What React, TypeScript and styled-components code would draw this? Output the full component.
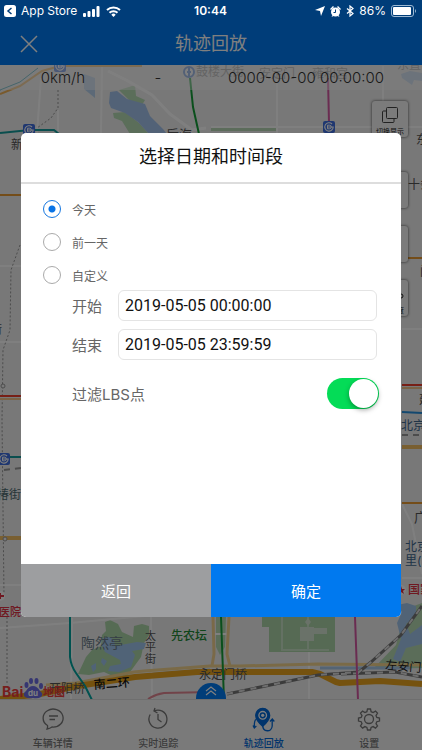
import React, { useState } from "react";
import styled, { createGlobalStyle } from "styled-components";

const sans = `"Inter", "Noto Sans CJK SC", sans-serif`;

const GlobalStyle = createGlobalStyle`
  * { box-sizing: border-box; }
  body { margin: 0; font-family: ${sans}; }
  button, input { font-family: inherit; }
`;

const Screen = styled.div`
  position: relative;
  display: flex;
  flex-direction: column;
  min-height: 100vh;
  overflow: hidden;
  background: #f4f4f4;
`;

const StatusBar = styled.div`
  position: relative;
  z-index: 3;
  display: grid;
  grid-template-columns: 1fr auto 1fr;
  align-items: center;
  height: 22px;
  padding: 0 5px 0 4px;
  background: #003d79;
  color: #fff;
  font-size: 12px;
  line-height: 20px;
`;

const StatusGroup = styled.div<{ $end?: boolean }>`
  display: flex;
  align-items: center;
  justify-content: ${(p) => (p.$end ? "flex-end" : "flex-start")};
  gap: ${(p) => (p.$end ? 5 : 6)}px;
`;

const BackLink = styled.a`
  display: flex;
  align-items: center;
  gap: 5px;
  color: inherit;
  text-decoration: none;
`;

const Clock = styled.time`
  font-weight: 600;
`;

const Header = styled.header`
  display: grid;
  grid-template-columns: 44px 1fr 44px;
  align-items: center;
  height: 43px;
  padding: 0 7px;
  background: #007af2;
  color: #fff;
`;

const PlainButton = styled.button`
  display: flex;
  align-items: center;
  justify-content: center;
  padding: 0;
  border: 0;
  background: none;
  color: inherit;
`;

const HeaderTitle = styled.h1`
  margin: 0;
  font-size: 18px;
  line-height: 24px;
  font-weight: 400;
  text-align: center;
`;

const MapArea = styled.main`
  position: relative;
  flex: 1;
  min-height: 634px;
`;

const MapCanvas = styled.svg`
  position: absolute;
  inset: 0;
  width: 100%;
  height: 100%;
`;

const InfoStrip = styled.div`
  position: relative;
  display: grid;
  grid-template-columns: 126px 64px 1fr;
  height: 25px;
  align-items: center;
  text-align: center;
  background: rgba(255, 255, 255, 0.45);
  color: #333;
  font-size: 15px;
  font-weight: 300;
`;

const MapTools = styled.div`
  position: absolute;
  top: 36px;
  right: 14px;
  display: flex;
  flex-direction: column;
  gap: 18px;
`;

const MapTool = styled.button<{ $spaced?: boolean }>`
  display: flex;
  flex-direction: column;
  align-items: center;
  justify-content: space-between;
  width: 36px;
  height: 36px;
  padding: 6px 0 0;
  margin-bottom: ${(p) => (p.$spaced ? 17 : 0)}px;
  border: 0;
  border-radius: 3px;
  background: #f6f6f6;
  box-shadow: 0 0 3px rgba(0, 0, 0, 0.7);
  color: #222;
  font-size: 7px;
  line-height: 11px;
  white-space: nowrap;
`;

const ExpandButton = styled.button`
  position: absolute;
  left: 50%;
  bottom: 0;
  display: flex;
  align-items: center;
  justify-content: center;
  width: 30px;
  height: 16px;
  margin-left: -15px;
  padding: 0;
  border: 0;
  border-radius: 16px 16px 0 0;
  background: #007af2;
  color: #fff;
`;

const TabBar = styled.nav`
  display: grid;
  grid-template-columns: repeat(4, 1fr);
  height: 51px;
  border-top: 1px solid #ddd;
  background: #f4f4f4;
`;

const Tab = styled.a<{ $active?: boolean }>`
  display: flex;
  flex-direction: column;
  align-items: center;
  justify-content: flex-end;
  gap: 6px;
  color: ${(p) => (p.$active ? "#0068d8" : "#777")};
  font-size: 10px;
  line-height: 14px;
  font-weight: 500;
  text-decoration: none;
`;

const Backdrop = styled.div`
  position: absolute;
  inset: 0;
  z-index: 2;
  display: flex;
  align-items: center;
  padding: 0 21px;
  background: rgba(0, 0, 0, 0.5);
`;

const Dialog = styled.form`
  flex: 1;
  overflow: hidden;
  border-radius: 5px;
  background: #fff;
`;

const DialogTitle = styled.h2`
  margin: 0;
  padding: 12px 0 13px;
  border-bottom: 2px solid #ddd;
  color: #111;
  font-size: 18px;
  line-height: 24px;
  font-weight: 400;
  text-align: center;
`;

const DialogBody = styled.div`
  min-height: 380px;
  padding: 10px 22px 0;
  color: #666;
`;

const RadioList = styled.div`
  display: grid;
  gap: 3px;
`;

const RadioRow = styled.label`
  display: flex;
  align-items: center;
  gap: 11px;
  height: 30px;
  font-size: 12px;
`;

const Radio = styled.input`
  appearance: none;
  width: 18px;
  height: 18px;
  margin: 0;
  border: 1px solid #aaa;
  border-radius: 50%;

  &:checked {
    border-color: #1677e0;
    background: radial-gradient(circle, #0873e6 3px, transparent 4px);
  }
`;

const DateFields = styled.div`
  display: grid;
  gap: 8px;
  padding: 0 2px 0 29px;
`;

const DateRow = styled.label`
  display: grid;
  grid-template-columns: 46px 1fr;
  align-items: center;
  font-size: 15px;
`;

const DateInput = styled.input`
  width: 100%;
  height: 31px;
  padding: 0 6px;
  border: 1px solid #e4e4e4;
  border-radius: 6px;
  background: #fff;
  color: #111;
  font-family: Roboto, sans-serif;
  font-size: 16px;
`;

const FilterRow = styled.label`
  display: flex;
  align-items: center;
  justify-content: space-between;
  margin-top: 18px;
  padding-left: 29px;
  font-size: 15px;
`;

const Switch = styled.input`
  appearance: none;
  width: 52px;
  height: 31px;
  margin: 0;
  padding: 1px;
  border-radius: 16px;
  background: #ddd;

  &::before {
    content: "";
    display: block;
    width: 29px;
    height: 29px;
    border-radius: 50%;
    background: #fff;
    box-shadow: 0 2px 5px rgba(0, 0, 0, 0.35);
  }

  &:checked {
    background: #04dc57;
  }

  &:checked::before {
    margin-left: 21px;
  }
`;

const Actions = styled.div`
  display: grid;
  grid-template-columns: 1fr 1fr;
`;

const Action = styled.button<{ $primary?: boolean }>`
  height: 53px;
  padding: 0;
  border: 0;
  background: ${(p) => (p.$primary ? "#0079ef" : "#9d9ea0")};
  color: #fff;
  font-size: 15px;
`;

const Station = ({ x, y }: { x: number; y: number }) => (
  <g transform={`translate(${x} ${y})`}>
    <rect x="-6" y="-6" width="12" height="12" rx="2" fill="#3f6fe0" />
    <path d="M3 -3A4.200 4.200 0 1 0 4.200 0H-1" fill="none" stroke="#fff" strokeWidth="1.100" />
    <path d="M-1.500 -1.800H0.500a1.800 1.800 0 0 1 0 3.600H-1.500z" fill="none" stroke="#fff" />
  </g>
);

const CityMap = () => (
  <MapCanvas viewBox="0 65 422 634" preserveAspectRatio="xMidYMid slice" fontFamily={sans} aria-hidden="true">
    <rect y="65" width="422" height="634" fill="#f0f0f0" />

    {/* parks and lakes */}
    <path d="M119 90l10-3 6-2 1 11 9 4-3 5-12-4zM113 113l12-1 14 11 10 11h-19l-8-13-8-3z" fill="#b6dcb4" />
    <path d="M110 92l7-1 10 8 18 5 5 12 13 13 4 5h-18l-11-12-13-9-14-5-2-5z" fill="#a5c5ee" />
    <path d="M84 74l11 4v20l-11-9zM401 74l9-3 12 2v8l-8-1-2 5-10-7z" fill="#b9d3ee" />
    <path d="M211 127h66v4h-66z" fill="#b9d9b7" />
    <path d="M78 674l8-17 6-7 9-4 1-11 4-4-1-9 5-2 8 4 4 8 11 5 1-11 8-2 7 2v9l-5 8-3 14-8 11-6 8-12 1-11-5-15 3z" fill="#add6a8" />
    <path d="M103 638l7-1 4 3 1 6 22-4 9 1-2 6-12 2 3 4-4 12-12 5-11-1 2-5 11-2-1-4-15-8-3-6zM91 666l5-3v6l-3 3zM102 658l5 3-3 5-3-4z" fill="#a1c6ef" />
    <path d="M262 611h73v41h-66v-25h-7z" fill="#acd5a8" />
    <path d="M282 610v40h26v-40M308 650h21" fill="none" stroke="#c9e3c6" strokeWidth="2" />
    <path d="M300 627h14v14h-14zM314 628h13v6h-13zM305 622l3-4 3 4-3 4z" fill="#d5e5d2" />
    <path d="M373 669l23-24 10-36 16-6v65z" fill="#b7dbb3" />
    <path d="M397 605l10-2 9 3v10l-10 8 4 10 12-9v19l-16 4-6 14-7-3 8-20-4-16 5-11z" fill="#a3c7ed" />
    <path d="M216 617h10l-1 30-5 8-4-8z" fill="#b7dbb3" />

    {/* minor roads */}
    <g fill="none" stroke="#fff" strokeWidth="2">
      <path d="M41 78l-4 55M102 66l-1 67M58 110v23M277 66v67M383 66v130M211 127h211" />
      <path d="M108 71l20 10 24 14 18 19 22 16 14-2" strokeWidth="3" />
      <path d="M0 266h21M0 342h21M0 585h21M402 329h20M402 504l10 20 10 50M402 578h20" />
      <path d="M0 628l70-5 75-7M151 617l1 82M72 618l-1 81M309 652v47M214 634h14" />
    </g>
    <g fill="none" stroke="#999" strokeWidth="1" strokeDasharray="2 2">
      <path d="M58 90v18l-7 10-14 10M20 245l-9 25-1 60-7 20-1 70 2 176M7 617v67" />
    </g>

    {/* main roads */}
    <path d="M0 94l20-8 22-15 18-5h82" fill="none" stroke="#f3b45a" strokeWidth="2" />
    <path d="M0 90l20-8 18-14" fill="none" stroke="#2d9eb4" strokeWidth="1" />
    <path d="M0 195h21M402 258h20M402 503h20" stroke="#e99b32" strokeWidth="2" />
    <path d="M0 538h21M402 447h20" stroke="#f2be62" strokeWidth="4" />
    <path d="M0 396h21M402 385h20" stroke="#ee3e2d" strokeWidth="2" />
    <path d="M0 399h21M402 388h20" stroke="#f4c48a" strokeWidth="2" />
    <path d="M213 617l1 37-2 12M229 617l-2 37 3 12" fill="none" stroke="#f5d391" strokeWidth="3" />
    <path d="M46 685l30-2 58-11 10-1 66-5 30 0 78-2 104 1" fill="none" stroke="#f4d58e" strokeWidth="3" />
    <path d="M138 676l30-3 42-3M320 668h90" fill="none" stroke="#a9c8e9" strokeWidth="3" />
    <path d="M0 699l40-5 38-8 57-9 62-5 34 0 81 0 8 2 16 8 4 1 40-2 42 3" fill="none" stroke="#eba51e" strokeWidth="6" strokeLinejoin="round" />
    <g fill="none">
      <path d="M227 694l91-19 41-3 12-10 30-27 21-29M341 674l54-2 27 5" stroke="#777" strokeWidth="3" />
      <path d="M227 694l91-19 41-3 12-10 30-27 21-29M341 674l54-2 27 5" stroke="#ddd" strokeWidth="2" strokeDasharray="6 6" />
      <path d="M4 470l17-2M402 435h20" stroke="#999" strokeWidth="2" strokeDasharray="6 5" />
    </g>

    {/* metro lines */}
    <g fill="none" strokeWidth="2">
      <path d="M0 133l30-3h24l5 4M10 457h11" stroke="#159d9c" />
      <path d="M70 617v40q1 9 6 16l9 13 7 14" stroke="#00a5a0" />
      <path d="M190 78l3 29 6 27M221 617l3 83" stroke="#159f38" />
      <path d="M328 78l1 45M355 617l3 83" stroke="#d558a2" />
      <path d="M402 412l20 1" stroke="#2791df" />
      <path d="M148 699q8-5 16-6l47-1" stroke="#e28792" />
    </g>
    <Station x={60} y={66} />
    <Station x={29} y={130} />
    <Station x={329} y={127} />
    <Station x={4} y={459} />
    <circle cx="189" cy="72" r="5" fill="#fff" stroke="#5d8ddd" strokeWidth="2" />
    <path d="M189 68v8M187 72h4" stroke="#5d8ddd" strokeWidth="2" />
    <g fill="#f2f2f2" stroke="#999">
      <circle cx="3" cy="386" r="2" />
      <circle cx="5" cy="539" r="2" />
    </g>

    {/* place names */}
    <g fontSize="12" fill="#555">
      <g fill="#999">
        <text x="196" y="76">鼓楼大街</text>
        <text x="259" y="78">安定门</text>
        <text x="312" y="78">雍和宫</text>
        <text x="397" y="69">东直门</text>
      </g>
      <text x="166" y="139" fontSize="13">后海</text>
      <text x="11" y="149">新街口</text>
      <text x="-10" y="334">街</text>
      <text x="-3" y="499" fill="#4d6b72">椿街</text>
      <text x="416" y="144">东</text>
      <text x="408" y="189">十条</text>
      <text x="420" y="276">门</text>
      <text x="419" y="404">建国</text>
      <text x="401" y="430" fill="#41688f">北京站</text>
      <text x="414" y="522" fontSize="13">广渠</text>
      <text x="405" y="551" fill="#41688f">北京</text>
      <text x="405" y="565" fill="#41688f">里(</text>
      <g fill="#df3042" fontWeight="500">
        <text x="-1" y="616" fontSize="11">医院</text>
        <text x="408" y="594">国家</text>
      </g>
      <text x="81" y="648" fontSize="14" fill="#6a7d8b">陶然亭</text>
      <text x="145" y="640" fontSize="11">太</text>
      <text x="145" y="651" fontSize="11">平</text>
      <text x="145" y="663" fontSize="11">街</text>
      <text x="171" y="640" fill="#238a36" fontWeight="500">先农坛</text>
      <text x="49" y="693">开阳桥</text>
      <text x="94" y="689" fill="#111" transform="rotate(-4 94 689)" fontWeight="500">南二环</text>
      <text x="199" y="679">永定门桥</text>
      <text x="385" y="669" fill="#222" transform="rotate(5 385 669)">左安门</text>
    </g>
    <circle cx="0" cy="596" r="5" fill="#fff" />
    <path d="M0 596h4M0 593v6" stroke="#df3042" strokeWidth="2" />
    <circle cx="401" cy="590" r="5" fill="#fff" />
    <path d="M401 586l1 3h3l-2 2 1 3-3-2z" fill="#df3042" />

    {/* map provider mark */}
    <g fill="#ec3d3a" fontWeight="700">
      <text x="2" y="697" fontSize="14">Bai</text>
      <text x="43" y="696" fontSize="11">地图</text>
    </g>
    <g fill="#6c6de2">
      <path d="M33 686q4 0 7 5 4 3 1 6-3 2-8 1-5 1-8-1-3-3 1-6 3-5 7-5z" />
      <ellipse cx="26.500" cy="685" rx="2" ry="3" />
      <ellipse cx="31" cy="681" rx="2" ry="3" />
      <ellipse cx="36.500" cy="681" rx="2" ry="3" />
      <ellipse cx="41" cy="686" rx="2" ry="3" />
    </g>
    <text x="28" y="696" fontSize="8" fontWeight="700" fill="#fff">du</text>
  </MapCanvas>
);

const tabs = [
  {
    label: "车辆详情",
    icon: (
      <g>
        <path d="M5.500 17.500A10 9 0 1 1 10 19Q8 20.500 5 21Q6 19 5.500 17.500z" />
        <path d="M7 8h9M7.500 11.500h5.500" />
      </g>
    ),
  },
  {
    label: "实时追踪",
    icon: (
      <g>
        <path d="M7 3A9 9 0 1 1 3.200 6.500M8 0L7 3l3.500 2M11 6v5.500l3.500 2.500" />
      </g>
    ),
  },
  {
    label: "轨迹回放",
    icon: (
      <g>
        <path d="M9.700.3a7 7 0 0 0-7 7c0 5 7 11 7 11s7-6 7-11a7 7 0 0 0-7-7z" fill="currentColor" />
        <circle cx="9.700" cy="7.300" r="3.800" stroke="#fff" />
        <circle cx="9.700" cy="7.300" r="1.600" fill="#fff" stroke="none" />
        <path d="M3.500 11C1 12 1.300 15 1.300 19.500M0 17.500l1.300 2.500 2-2" />
        <path d="M9.700 17c0 7.500 9 7.500 9.500 1V11.500M17 13.500l2.300-2.500 2 2.500" />
      </g>
    ),
  },
  {
    label: "设置",
    icon: (
      <g>
        <circle cx="11" cy="11" r="4.500" />
        <path d="M9.500 1h3l.6 2.700 2 .9 2.400-1.500 2 2.100-1.500 2.400.8 1.900 2.700.6v3l-2.700.6-.8 2 1.500 2.300-2 2.100-2.400-1.500-2 .8-.6 2.600h-3l-.6-2.600-2-.8-2.300 1.500-2.100-2.100L4 15.700l-.8-2-2.700-.6v-3l2.700-.6L4 7.600 2.500 5.200l2.100-2.100 2.300 1.500 2-.9z" />
      </g>
    ),
  },
];

const ranges = ["今天", "前一天", "自定义"];

export default function App() {
  const [range, setRange] = useState(ranges[0]);
  const [start, setStart] = useState("2019-05-05 00:00:00");
  const [end, setEnd] = useState("2019-05-05 23:59:59");
  const [filter, setFilter] = useState(true);

  return (
    <>
      <GlobalStyle />
      <Screen>
        <StatusBar>
          <StatusGroup>
            <BackLink href="#store">
              <svg width="12" height="12" viewBox="0 0 12 12" aria-hidden="true">
                <rect width="12" height="12" rx="2.500" fill="#fff" />
                <path d="M7.500 3L4 6l3.500 3" fill="none" stroke="#003d79" strokeWidth="1.500" />
              </svg>
              App Store
            </BackLink>
            <svg width="17" height="11" viewBox="0 0 17 11" fill="#fff" aria-hidden="true">
              <rect y="7" width="3" height="4" rx="1" />
              <rect x="4.500" y="5" width="3" height="6" rx="1" />
              <rect x="9" y="3" width="3" height="8" rx="1" />
              <rect x="13.500" y="0" width="3" height="11" rx="1" />
            </svg>
            <svg width="15" height="11" viewBox="0 0 15 11" fill="none" stroke="#fff" strokeWidth="2" aria-hidden="true">
              <path d="M1 4a9.500 9.500 0 0 1 13 0M3.500 6.800a5.700 5.700 0 0 1 8 0" />
              <path d="M7.500 11L5.300 8.800a3 3 0 0 1 4.400 0z" fill="#fff" stroke="none" />
            </svg>
          </StatusGroup>
          <Clock>10:44</Clock>
          <StatusGroup $end>
            <svg width="10" height="10" viewBox="0 0 10 10" fill="#fff" aria-hidden="true">
              <path d="M10 0L6 10 5 5 0 4z" />
            </svg>
            <svg width="11" height="11" viewBox="0 0 11 11" fill="#fff" aria-hidden="true">
              <circle cx="5.500" cy="6" r="4.500" />
              <path d="M0 3l3-3 1 1-3 3zM11 3L8 0 7 1l3 3zM1.500 11l1-2 1 1zM9.500 11l-1-2-1 1z" />
              <path d="M5.500 3.500V6.500H3.500" fill="none" stroke="#003d79" />
            </svg>
            <svg width="8" height="12" viewBox="0 0 8 12" fill="none" stroke="#fff" strokeWidth="1.200" aria-hidden="true">
              <path d="M1 3.500l6 5L4 11V1l3 2.500-6 5" />
            </svg>
            86%
            <svg width="26" height="12" viewBox="0 0 26 12" aria-hidden="true">
              <rect x="0.500" y="0.500" width="22" height="11" rx="2.500" fill="none" stroke="#9db9d3" />
              <rect x="2" y="2" width="18" height="8" rx="1" fill="#fff" />
              <path d="M24 4q2 2 0 4z" fill="#9db9d3" />
            </svg>
          </StatusGroup>
        </StatusBar>

        <Header>
          <PlainButton type="button" aria-label="关闭">
            <svg width="18" height="18" viewBox="0 0 18 18" stroke="currentColor" strokeWidth="1.500" aria-hidden="true">
              <path d="M1 1l16 16M17 1L1 17" />
            </svg>
          </PlainButton>
          <HeaderTitle>轨迹回放</HeaderTitle>
        </Header>

        <MapArea>
          <CityMap />
          <InfoStrip>
            <span>0km/h</span>
            <span>-</span>
            <span>0000-00-00 00:00:00</span>
          </InfoStrip>
          <MapTools>
            <MapTool type="button" $spaced>
              <svg width="16" height="16" viewBox="0 0 16 16" fill="none" stroke="#444" aria-hidden="true">
                <rect x="4.500" y="0.500" width="11" height="11" rx="1" />
                <path d="M4 4H1.500Q.5 4 .5 5v9.500q0 1 1 1H11q1 0 1-1V12" />
              </svg>
              切换显示
            </MapTool>
            <MapTool type="button" aria-label="定位" />
            <MapTool type="button" aria-label="路况" />
            <MapTool type="button">
              <svg width="36" height="14" viewBox="0 0 36 14" fill="none" stroke="#222" aria-hidden="true">
                <circle cx="29" cy="10" r="2" />
              </svg>
              播放速度
            </MapTool>
          </MapTools>
          <ExpandButton type="button" aria-label="展开">
            <svg width="12" height="10" viewBox="0 0 12 10" fill="none" stroke="currentColor" strokeWidth="1.200" aria-hidden="true">
              <path d="M1 5l5-4 5 4M1 9l5-4 5 4" />
            </svg>
          </ExpandButton>
        </MapArea>

        <TabBar>
          {tabs.map((tab) => {
            const active = tab.label === "轨迹回放";
            return (
              <Tab key={tab.label} href="#" $active={active} aria-current={active ? "page" : undefined}>
                <svg width="22" height="22" viewBox="0 0 22 22" fill="none" stroke="currentColor" strokeWidth="1.300" overflow="visible" aria-hidden="true">
                  {tab.icon}
                </svg>
                {tab.label}
              </Tab>
            );
          })}
        </TabBar>

        <Backdrop>
          <Dialog role="dialog" aria-labelledby="dialog-title" onSubmit={(e) => e.preventDefault()}>
            <DialogTitle id="dialog-title">选择日期和时间段</DialogTitle>
            <DialogBody>
              <RadioList role="radiogroup" aria-labelledby="dialog-title">
                {ranges.map((r) => (
                  <RadioRow key={r}>
                    <Radio type="radio" name="range" checked={range === r} onChange={() => setRange(r)} />
                    {r}
                  </RadioRow>
                ))}
              </RadioList>
              <DateFields>
                <DateRow>
                  开始
                  <DateInput value={start} onChange={(e) => setStart(e.target.value)} />
                </DateRow>
                <DateRow>
                  结束
                  <DateInput value={end} onChange={(e) => setEnd(e.target.value)} />
                </DateRow>
              </DateFields>
              <FilterRow>
                过滤LBS点
                <Switch type="checkbox" role="switch" checked={filter} onChange={(e) => setFilter(e.target.checked)} />
              </FilterRow>
            </DialogBody>
            <Actions>
              <Action type="button">返回</Action>
              <Action type="submit" $primary>
                确定
              </Action>
            </Actions>
          </Dialog>
        </Backdrop>
      </Screen>
    </>
  );
}
